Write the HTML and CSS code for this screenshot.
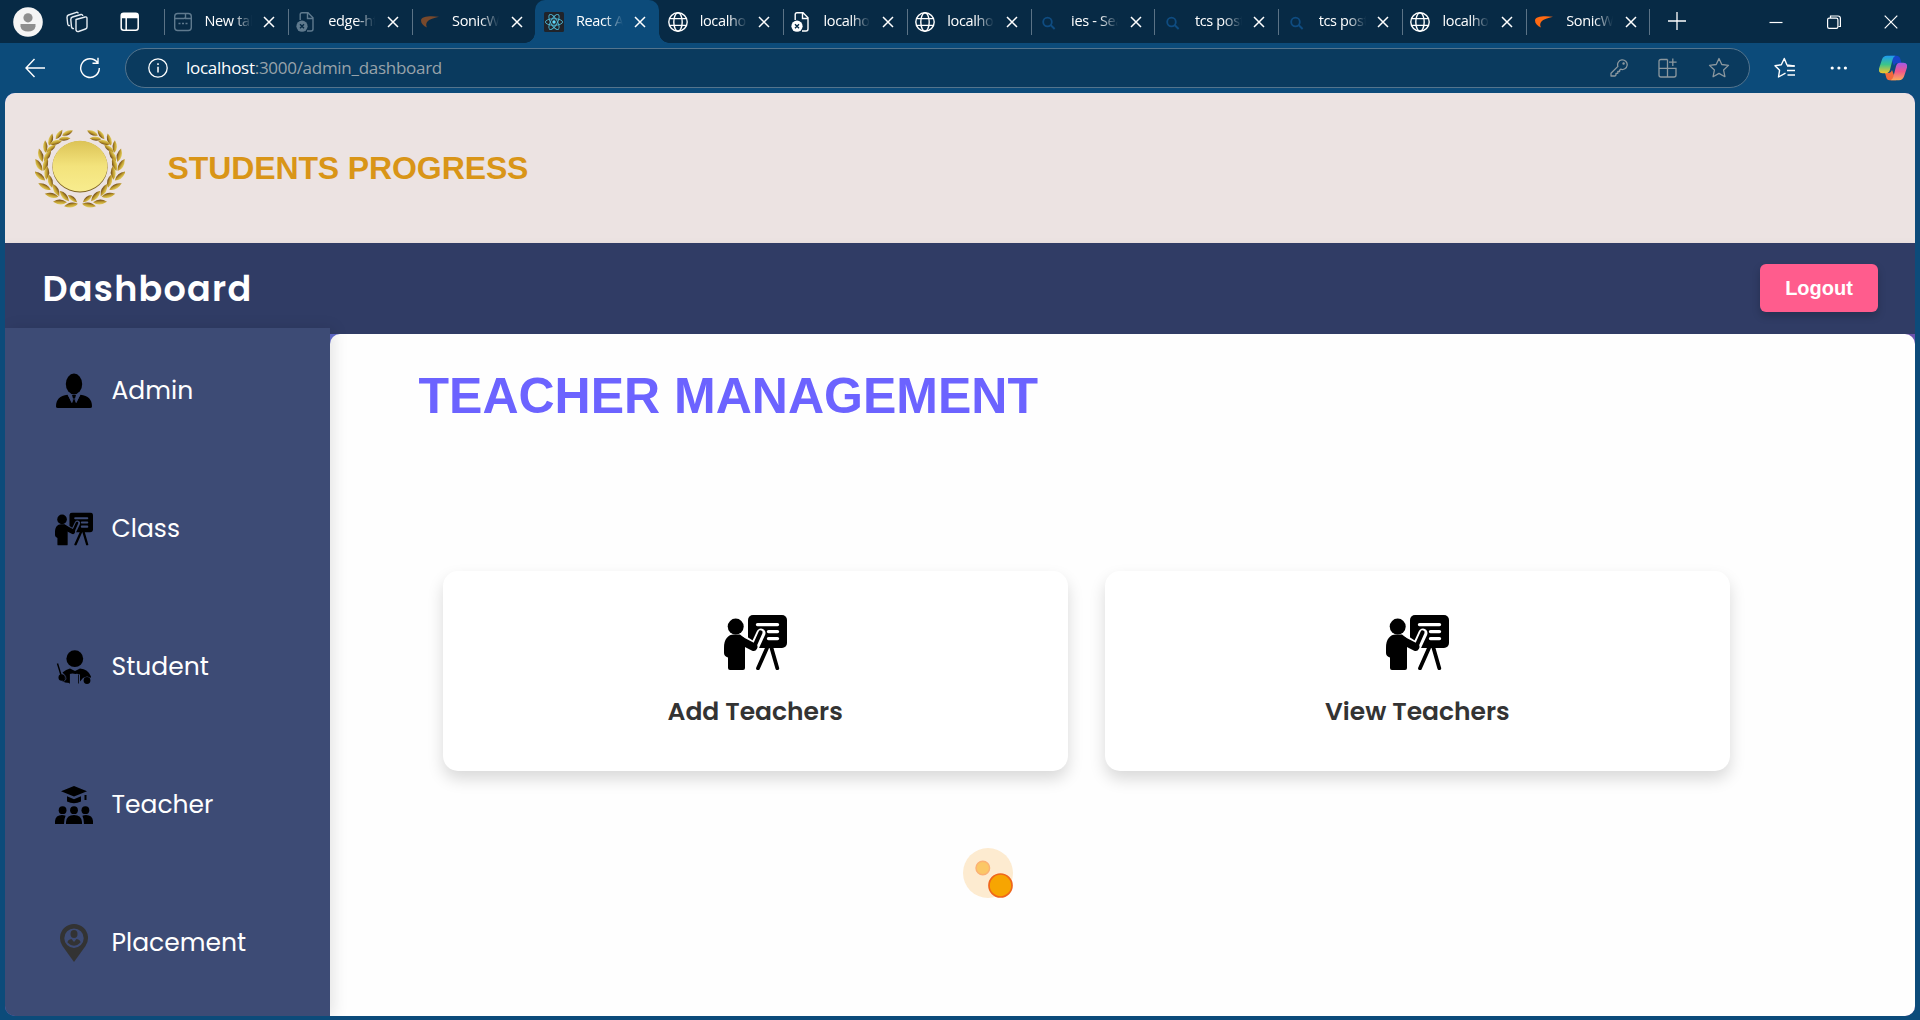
FILE: index.html
```html
<!DOCTYPE html>
<html lang="en">
<head>
<meta charset="utf-8">
<title>React App</title>
<link rel="stylesheet" href="styles.css">
</head>
<body>
<svg class="defs" aria-hidden="true">
  <defs>
    <symbol id="close" viewBox="0 0 12 12"><path d="M1 1l10 10M11 1L1 11" stroke="currentColor" stroke-width="1.5" fill="none"/></symbol>
    <symbol id="globe" viewBox="0 0 20 20"><g fill="none" stroke="currentColor" stroke-width="1.4"><circle cx="10" cy="10" r="9.2"/><ellipse cx="10" cy="10" rx="4.2" ry="9.2"/><path d="M1.6 6.6h16.8M1.6 13.4h16.8"/></g></symbol>
    <symbol id="errpage" viewBox="0 0 20 20"><path d="M4.2 8V2.5Q4.200 .8 6 .8h6l5 5V17q0 2-2 2h-4M11.500 1v5.500h5.500" fill="none" stroke="currentColor" stroke-width="1.4"/><circle cx="6" cy="14.200" r="5.600" fill="currentColor"/><path d="M4 12.200l4 4M8 12.200l-4 4" stroke="#072a45" stroke-width="1.400"/></symbol>
    <symbol id="newtab" viewBox="0 0 20 20"><g fill="none" stroke="currentColor" stroke-width="1.400"><rect x="1.700" y="1.500" width="16.600" height="17" rx="3"/><path d="M2 6.500h9l1.500-1V1.800M12 6.500h6"/></g><path d="M5.500 11.500h2m1.500 0h2m1.500 0h2" stroke="currentColor" stroke-width="1.600"/></symbol>
    <symbol id="sonic" viewBox="0 0 20 20"><path d="M19 4.800C11 3.600 1 4 1 8.500c0 3 2.500 5.500 6 7C4.500 10.500 8 7 19 4.800z" fill="currentColor"/></symbol>
    <symbol id="search" viewBox="0 0 20 20"><g fill="none" stroke="currentColor" stroke-width="1.800"><circle cx="8.500" cy="10" r="4.300"/><path d="M11.600 13l4 4"/></g></symbol>
    <symbol id="react" viewBox="0 0 20 20"><rect width="20" height="20" rx="1.500" fill="#20232a"/><g fill="none" stroke="#4fb8d4" stroke-width=".9"><ellipse cx="10" cy="10" rx="8.600" ry="3.300"/><ellipse cx="10" cy="10" rx="8.600" ry="3.300" transform="rotate(60 10 10)"/><ellipse cx="10" cy="10" rx="8.600" ry="3.300" transform="rotate(120 10 10)"/></g><circle cx="10" cy="10" r="1.700" fill="#61dafb"/></symbol>
    <symbol id="board" viewBox="0 0 63 55">
      <rect x="24" y="0" width="39" height="33" rx="5"/>
      <path d="M33.500 9.600h20M44.500 16.600h9M44.500 23.600h9" class="gap" stroke-width="3.400" stroke-linecap="round"/>
      <path d="M43 33l-9 20.200M47.500 33l5.800 20.200" class="ink" stroke-width="3.800" stroke-linecap="round"/>
      <path d="M19 24.500l11.500 7.500 6.500-14" class="gap" stroke-width="9" stroke-linecap="round" stroke-linejoin="round"/>
      <path d="M15 24.500l14.500 7.500" class="ink" stroke-width="7.800" stroke-linecap="round"/>
      <path d="M30.500 31l6-13.500" class="ink" stroke-width="4.200" stroke-linecap="round"/>
      <circle cx="11.700" cy="11.600" r="8"/>
      <path d="M0 33C0 24 4 19.500 10 19.500h6l5 4V53q0 2-2 2H6q-2 0-2-2V42.500Q0 41 0 38z"/>
    </symbol>
    <linearGradient id="disc" x1="0" y1="0" x2="0" y2="1"><stop offset="0" stop-color="#dcc356"/><stop offset=".5" stop-color="#f3e37c"/><stop offset="1" stop-color="#f8ec8e"/></linearGradient>
    <linearGradient id="gold" x1="0" y1="0" x2="0" y2="1"><stop offset="0" stop-color="#e3cf62"/><stop offset=".5" stop-color="#c09d2e"/><stop offset="1" stop-color="#6b461a"/></linearGradient>
    <path id="leaf" d="M-7 0Q-1-5 7 0 0 5-7 0z" fill="url(#gold)"/>
    <g id="branch">
      <use href="#leaf" transform="translate(32.500 4) rotate(-25) scale(.85)"/><use href="#leaf" transform="translate(24 5.500) rotate(-55) scale(.85)"/>
      <use href="#leaf" transform="translate(29.500 9.700) rotate(-5) scale(.85)"/><use href="#leaf" transform="translate(15.700 10.500) rotate(-75) scale(.9)"/>
      <use href="#leaf" transform="translate(21 13.500) rotate(-15) scale(.9)"/><use href="#leaf" transform="translate(10.300 17.500) rotate(-92) scale(.9)"/>
      <use href="#leaf" transform="translate(16 19.500) rotate(-38) scale(.9)"/><use href="#leaf" transform="translate(5.700 26.300) rotate(-105)"/>
      <use href="#leaf" transform="translate(12.500 26.500) rotate(-60)"/><use href="#leaf" transform="translate(3.800 36) rotate(-120)"/>
      <use href="#leaf" transform="translate(10.500 35.300) rotate(-75)"/><use href="#leaf" transform="translate(4.800 47) rotate(-140)"/>
      <use href="#leaf" transform="translate(11.800 43.700) rotate(-88)"/><use href="#leaf" transform="translate(9.500 57.500) rotate(-153)"/>
      <use href="#leaf" transform="translate(15.300 52) rotate(-105)"/><use href="#leaf" transform="translate(16.600 66.300) rotate(-168)"/>
      <use href="#leaf" transform="translate(21 61) rotate(-118)"/><use href="#leaf" transform="translate(25 73) rotate(-178)"/>
      <use href="#leaf" transform="translate(29.300 67) rotate(-132)"/><use href="#leaf" transform="translate(36 76) rotate(170)"/>
      <use href="#leaf" transform="translate(37.500 69.700) rotate(-142) scale(.85)"/>
    </g>
  </defs>
</svg>

<div class="window">
  <header class="tabstrip">
    <div class="strip-tools">
      <svg width="30" height="30" viewBox="0 0 30 30"><circle cx="15" cy="15" r="14.800" fill="#f5f5f5"/><circle cx="15" cy="10.800" r="4.600" fill="#8f8f8f"/><path d="M7.500 17h15v2.500q-1 5-7.500 5t-7.500-5z" fill="#8f8f8f"/></svg>
      <svg class="workspaces" width="22" height="22" viewBox="0 0 22 22"><g fill="none" stroke="#e6edf3" stroke-width="1.400" stroke-linejoin="round"><path d="M10 8.500l9-2.500q2-.5 2 1.500v8.500q0 1.500-1.500 2l-7 2.500q-2 .5-2.500-1.500z"/><path d="M8 17.500q-2 .5-2.500-1.500L4.800 8.500q0-2 1.700-2.500l8.500-2.500q1.500-.3 1.800 1.500"/><path d="M4 14.500q-2 .5-2.300-1.500L1 6.500q0-2 1.500-2.500L10.500 1.300q1.500-.3 1.800 1"/></g></svg>
      <svg width="20" height="20" viewBox="0 0 20 20"><rect x="1.200" y="1.200" width="17" height="17" rx="2.500" fill="none" stroke="#fff" stroke-width="1.500"/><path d="M1.200 6.300V3.500q0-2.300 2.300-2.300h12.400Q18.200 1.200 18.200 3.500v2.800z" fill="#fff"/><path d="M6.200 6v12.200" stroke="#fff" stroke-width="1.500"/></svg>
    </div>
    <div class="tabs">
      <div class="tab"><svg class="fav dim"><use href="#newtab"/></svg><span>New tab</span><svg class="x"><use href="#close"/></svg></div>
      <div class="tab"><svg class="fav dim"><use href="#errpage"/></svg><span>edge-https</span><svg class="x"><use href="#close"/></svg></div>
      <div class="tab"><svg class="fav rust"><use href="#sonic"/></svg><span>SonicWall</span><svg class="x"><use href="#close"/></svg></div>
      <div class="tab active"><svg class="fav"><use href="#react"/></svg><span>React App</span><svg class="x"><use href="#close"/></svg></div>
      <div class="tab bare"><svg class="fav"><use href="#globe"/></svg><span>localhost</span><svg class="x"><use href="#close"/></svg></div>
      <div class="tab"><svg class="fav"><use href="#errpage"/></svg><span>localhost</span><svg class="x"><use href="#close"/></svg></div>
      <div class="tab"><svg class="fav"><use href="#globe"/></svg><span>localhost</span><svg class="x"><use href="#close"/></svg></div>
      <div class="tab"><svg class="fav blue"><use href="#search"/></svg><span>ies - Search</span><svg class="x"><use href="#close"/></svg></div>
      <div class="tab"><svg class="fav blue"><use href="#search"/></svg><span>tcs poster</span><svg class="x"><use href="#close"/></svg></div>
      <div class="tab"><svg class="fav blue"><use href="#search"/></svg><span>tcs poster</span><svg class="x"><use href="#close"/></svg></div>
      <div class="tab"><svg class="fav"><use href="#globe"/></svg><span>localhost</span><svg class="x"><use href="#close"/></svg></div>
      <div class="tab"><svg class="fav orange"><use href="#sonic"/></svg><span>SonicWall</span><svg class="x"><use href="#close"/></svg></div>
      <div class="tab-add"><svg width="18" height="18" viewBox="0 0 18 18"><path d="M9 0v18M0 9h18" stroke="#fff" stroke-width="1.300"/></svg></div>
    </div>
    <div class="controls">
      <svg width="14" height="14" viewBox="0 0 14 14"><path d="M.5 7.500h13" stroke="#fff" stroke-width="1.200"/></svg>
      <svg width="14" height="14" viewBox="0 0 14 14"><path d="M3.500 3V1H11q2.400 0 2.400 2.400v8.100h-2" fill="none" stroke="#fff" stroke-width="1.200"/><rect x=".6" y="3.100" width="10.300" height="10.300" rx="1.600" fill="none" stroke="#fff" stroke-width="1.200"/></svg>
      <svg width="14" height="14" viewBox="0 0 14 14"><path d="M.7.700l12.600 12.600M13.300.700L.7 13.300" stroke="#fff" stroke-width="1.200"/></svg>
    </div>
  </header>

  <div class="toolbar">
    <div class="nav-buttons">
      <svg width="20" height="20" viewBox="0 0 20 20"><path d="M9.500 1L1 10l8.500 9M1 10h19" fill="none" stroke="#fff" stroke-width="1.400"/></svg>
      <svg width="22" height="22" viewBox="0 0 22 22"><path d="M18.500 5.600A9.300 9.300 0 1 0 20.300 11M19 .8v5.500h-5.500" fill="none" stroke="#fff" stroke-width="1.400"/></svg>
    </div>
    <div class="address">
      <svg width="20" height="20" viewBox="0 0 20 20"><circle cx="10" cy="10" r="9.200" fill="none" stroke="#fff" stroke-width="1.300"/><path d="M10 8.800v5.700M10 5.300v1.700" stroke="#fff" stroke-width="1.500"/></svg>
      <div class="url"><b>localhost</b>:3000/admin_dashboard</div>
      <div class="address-icons">
        <svg width="18" height="18" viewBox="0 0 18 18"><g fill="none" stroke="#8c989f" stroke-width="1.300" stroke-linejoin="round"><path d="M7.900 7.400A4.800 4.800 0 1 1 10.700 10.200L9.600 11.300V12.500H7.800V14.300H6V16L5 17H1v-2.800z"/></g><circle cx="13.600" cy="4.500" r="1.200" fill="#8c989f"/></svg>
        <svg width="20" height="20" viewBox="0 0 20 20"><path d="M9.500 1.500H3q-2 0-2 2V17q0 2 2 2h13q2 0 2-2v-6.700H1M9.500 19V1.500M14.800.500v7.500M11 4.200h7.600" fill="none" stroke="#8c989f" stroke-width="1.300"/></svg>
        <svg width="22" height="22" viewBox="0 0 22 22"><path d="M11 1.500l2.800 6 6.700.9-4.900 4.600 1.300 6.700-5.900-3.300-5.900 3.300L6.400 13 1.500 8.400l6.700-.9z" fill="none" stroke="#8c989f" stroke-width="1.300" stroke-linejoin="round"/></svg>
      </div>
    </div>
    <div class="toolbar-right">
      <svg width="22" height="22" viewBox="0 0 22 22"><path d="M13 9h8M13 13.500h8M13.500 18H21" stroke="#fff" stroke-width="1.400"/><path d="M20 9L13 8 10.300 1.500 7.300 7.800 1 8.700l4.600 4.500L4.500 20l7-3.800" fill="none" stroke="#fff" stroke-width="1.400" stroke-linejoin="round"/></svg>
      <svg width="18" height="6" viewBox="0 0 18 6"><g fill="#fff"><circle cx="3.200" cy="3" r="1.600"/><circle cx="9.900" cy="3" r="1.600"/><circle cx="16.400" cy="3" r="1.600"/></g></svg>
      <svg width="28" height="26" viewBox="0 0 28 26">
        <defs>
          <linearGradient id="cpa" x1="0" y1="0" x2="0" y2="1"><stop offset="0" stop-color="#1e9bf0"/><stop offset=".5" stop-color="#3cc58a"/><stop offset="1" stop-color="#f7c52b"/></linearGradient>
          <linearGradient id="cpb" x1="0" y1="0" x2="0" y2="1"><stop offset="0" stop-color="#a259e6"/><stop offset=".5" stop-color="#f0568b"/><stop offset="1" stop-color="#fbab5a"/></linearGradient>
        </defs>
        <path d="M11 .8h6.500q3 0 4 3.700L22.500 8H18q-2 0-3 3z" fill="#1646c8"/>
        <path d="M17 25.200h-6.500q-3 0-3.500-3.700L6 18h4q2 0 3-3z" fill="#f26a3b"/>
        <path d="M8 .8h8.500q-2 .5-3 4l-2.500 10q-1 3.400-4 3.400H3.500Q-.7 18-.2 14L3 4.500Q4.300.800 8 .8z" fill="url(#cpa)"/>
        <path d="M20 25.200h-8.500q2-.5 3-4L17 11.200q1-3.400 4-3.400h3.500q4.200.200 3.700 4L25 21.500q-1.300 3.700-5 3.700z" fill="url(#cpb)"/>
      </svg>
    </div>
  </div>

  <main class="page">
    <div class="banner">
      <svg width="90" height="80" viewBox="0 0 90 80"><use href="#branch"/><use href="#branch" transform="translate(90 0) scale(-1 1)"/><ellipse cx="45" cy="37.900" rx="27.600" ry="25.600" fill="#7d6220"/><ellipse cx="45" cy="37.100" rx="27.500" ry="25.300" fill="url(#disc)"/></svg>
      <h1>STUDENTS PROGRESS</h1>
    </div>
    <div class="navbar"><h2>Dashboard</h2><button class="logout">Logout</button></div>
    <div class="body">
      <aside class="sidebar">
        <a class="item"><svg viewBox="0 0 38 38"><ellipse cx="19" cy="12" rx="8.200" ry="10.400"/><path d="M12.500 22.800l4.500 8 1-4.300-1-3.500h4l-1 3.500 1 4.300 4.500-8Q37 24 37 34.500q0 1.500-2 1.500H3q-2 0-2-1.500Q1 24 12.500 22.800z"/><path class="gap" stroke-width=".9" d="M13.200 22.500l3.600 8 1.600-4M24.800 22.500l-3.600 8-1.600-4"/></svg><span>Admin</span></a>
        <a class="item"><svg viewBox="0 0 63 55"><use href="#board"/></svg><span>Class</span></a>
        <a class="item"><svg viewBox="0 0 38 38"><circle cx="19.800" cy="10.700" r="8.400"/><path d="M2.500 15.500L6 27" stroke="#000" stroke-width="1.400"/><circle cx="6.700" cy="29.500" r="3.200"/><circle cx="32" cy="32.500" r="3.400"/><path d="M7.500 24.500Q11 21.500 15 20.500l5 2.500 5-2.500q8 .5 11 8l-.5 1.500q-3-3-7.500 0l-3 3.500V26.500q-2.500-1-4.500-.5-3-1-6 0V35q-5-.2-7.500-2Q13 30 7.500 24.500z"/><path d="M23.500 26.500v9M14.500 26v9.500" stroke="#000" stroke-width=".8"/><path class="gap" stroke-width=".7" d="M8 25.500q3.500 2.500 3 5.500-1 2-2.500 2.500"/></svg><span>Student</span></a>
        <a class="item"><svg viewBox="0 0 38 38"><path d="M6 5.300L19 0l13 5.300-13 5.200zM12 10.300l7 3 7-3v5.300q-7 3.400-14 0zM29.500 9h2v5h-2z"/><circle cx="7.600" cy="24.200" r="3.900"/><circle cx="19" cy="24.200" r="3.900"/><circle cx="30.400" cy="24.200" r="3.900"/><path d="M0 38v-3q.5-6 7-6 2 0 3.600.8Q9 33 9 38zM11 38v-2q.5-7 8-7t8 7v2zM38 38v-3q-.5-6-7-6-2 0-3.600.8Q29 33 29 38z"/></svg><span>Teacher</span></a>
        <a class="item"><svg viewBox="0 0 38 38" class="pin"><path fill-rule="evenodd" d="M19 38L7.500 22A14 14 0 1 1 30.500 22zM19 4.500a9.700 9.700 0 1 0 0 19.400 9.700 9.700 0 0 0 0-19.400z"/><ellipse cx="19" cy="10" rx="3.500" ry="4"/><path d="M12.500 18.500q0-3 4-3.500l2.500 3 2.500-3q4 .5 4 3.500-3 3.200-6.500 3.200t-6.500-3.200z"/></svg><span>Placement</span></a>
      </aside>
      <section class="content">
        <h3>TEACHER MANAGEMENT</h3>
        <div class="cards">
          <div class="card"><svg viewBox="0 0 63 55"><use href="#board"/></svg><p>Add Teachers</p></div>
          <div class="card"><svg viewBox="0 0 63 55"><use href="#board"/></svg><p>View Teachers</p></div>
        </div>
      </section>
    </div>
  </main>
  <svg class="pointer" width="50" height="50" viewBox="0 0 50 50"><circle cx="25" cy="25" r="25" fill="#fdebd0"/><circle cx="19.800" cy="20" r="6.800" fill="#fbc766" stroke="#fbb173" stroke-width="1.400"/><circle cx="37.500" cy="37.500" r="11.500" fill="#f7a502" stroke="#ef661c" stroke-width="1.700"/></svg>
</div>
</body>
</html>
```
FILE: styles.css
```css
* { box-sizing: border-box; }
body { margin: 0; font-family: "Liberation Sans", Arial, sans-serif; overflow: hidden; }
h1, h2, h3, p { margin: 0; }
svg { display: block; flex: none; }
.defs { position: absolute; width: 0; height: 0; }
.window { position: relative; display: flex; flex-direction: column; width: 1920px; height: 1020px; background: #0c4b7a; }

/* Browser tab strip */
.tabstrip { display: flex; height: 43px; background: #072a45; color: #fff; font-family: "Open Sans", sans-serif; }
.strip-tools { display: flex; align-items: center; width: 164px; padding-left: 13px; }
.workspaces { margin: 0 32px 0 23px; }
.tabs { display: flex; }
.tab { position: relative; display: flex; align-items: center; width: 123.8px; height: 43px; padding: 1px 0 0 8.500px; }
.tab::before { content: ""; position: absolute; left: 0; top: 9px; width: 1px; height: 26px; background: #5b7386; }
.tab span { width: 47px; margin: -3px 0 0 12px; overflow: hidden; white-space: nowrap; font-size: 14.5px; letter-spacing: -0.35px; -webkit-mask-image: linear-gradient(90deg, #000 60%, transparent); mask-image: linear-gradient(90deg, #000 60%, transparent); }
.fav { width: 20px; height: 20px; }
.x { width: 12px; height: 12px; margin-left: 11.500px; }
.dim { color: #5f7a8e; }
.rust { color: #78492c; }
.orange { color: #ff6a13; }
.blue { color: #0f4c81; }
.tab.active { background: #0c4b7a; border-radius: 10px 10px 0 0; z-index: 1; }
.tab.bare::before { display: none; }
.tab.active::before, .tab.active::after { content: ""; position: absolute; top: auto; bottom: 0; width: 10px; height: 10px; }
.tab.active::before { left: -10px; background: radial-gradient(circle at 0 0, transparent 9.500px, #0c4b7a 10px); }
.tab.active::after { right: -10px; background: radial-gradient(circle at 100% 0, transparent 9.500px, #0c4b7a 10px); }
.tab-add { position: relative; display: flex; align-items: center; padding: 0 0 2px 18px; }
.tab-add::before { content: ""; position: absolute; left: -1px; top: 9px; width: 1px; height: 26px; background: #5b7386; }
.controls { display: flex; align-items: center; gap: 43.500px; margin-left: auto; padding-right: 22px; }

/* Address row */
.toolbar { display: flex; align-items: center; height: 50px; }
.nav-buttons { display: flex; align-items: center; gap: 34px; width: 125px; padding-left: 25px; }
.address { display: flex; align-items: center; width: 1625px; height: 40px; padding: 0 19px 0 22px; border: 1px solid #54748d; border-radius: 20px; background: #0a3a5e; }
.url { margin: -2px 0 0 18px; font-family: "Open Sans", sans-serif; font-size: 17px; letter-spacing: -0.280px; color: #98a3aa; }
.url b { font-weight: 400; color: #fff; }
.address-icons { display: flex; align-items: center; gap: 30px; margin-left: auto; }
.toolbar-right { display: flex; align-items: center; padding-left: 24px; gap: 32.500px; }

/* Page */
.page { display: flex; flex-direction: column; width: 1910px; height: 923px; margin-left: 5px; border-radius: 10px; overflow: hidden; background: linear-gradient(135deg, #667eea, #764ba2); }
.banner { display: flex; align-items: center; height: 150px; padding: 0 30px; gap: 42.500px; background: #ece3e2; }
.banner svg { margin-top: 2px; }
.banner h1 { font-size: 32px; line-height: 36px; letter-spacing: -0.110px; color: #d99517; }
.navbar { display: flex; align-items: center; justify-content: space-between; height: 91px; padding: 0 37px 0 37.500px; background: #303c65; box-shadow: 0 4px 10px rgba(0, 0, 0, .1); }
.navbar h2 { font-family: Poppins, Inter, sans-serif; font-size: 35px; font-weight: 600; letter-spacing: 1.250px; color: #fff; }
.logout { width: 118px; height: 48px; margin-bottom: 2px; padding: 2px 0 0; border: 0; border-radius: 6px; background: #ff5c8d; color: #fff; font: 700 20px "Liberation Sans", Arial, sans-serif; box-shadow: 0 4px 8px rgba(0, 0, 0, .2); }
.body { display: flex; flex: 1; min-height: 0; }
.sidebar { position: relative; z-index: 1; display: flex; flex-direction: column; gap: 100px; width: 325px; margin-top: -6px; padding: 44px 0 0 50px; background: #3d4b75; box-shadow: 4px 0 14px rgba(0, 0, 0, .1); }
.item { display: flex; align-items: center; gap: 18.500px; height: 38px; color: #fff; font-family: Poppins, Inter, sans-serif; font-size: 25px; --gap: #3d4b75; }
.item svg { width: 38px; height: 38px; }
.item .pin { fill: #333; }
.gap { fill: none; stroke: var(--gap); }
.ink { fill: none; stroke: #000; }
.content { flex: 1; padding: 33px 185px 0 88.500px; border-radius: 10px 10px 0 0; background: #fefefe; }
.content h3 { font-size: 50px; line-height: 58px; color: #6c63ff; }
.cards { display: grid; grid-template-columns: 1fr 1fr; gap: 37px; margin: 146px 0 0 24px; }
.card { display: flex; flex-direction: column; align-items: center; height: 200px; padding-top: 44px; border-radius: 15px; background: #fff; box-shadow: 0 8px 16px rgba(0, 0, 0, .15); --gap: #fff; }
.card svg { width: 63px; height: 55px; }
.card p { margin-top: 25px; font-family: Poppins, Inter, sans-serif; font-size: 25px; line-height: 34px; font-weight: 600; color: #333; }

/* Pointer highlight floating over the page */
.pointer { position: absolute; left: 962.500px; top: 848px; overflow: visible; }
```
